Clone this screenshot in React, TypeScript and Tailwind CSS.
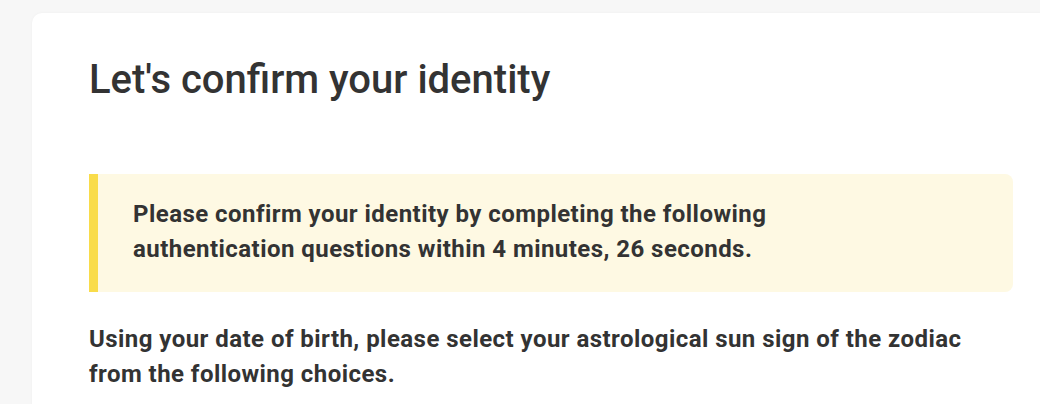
export default function App() {
	return (
		<div
			className="h-[404px] w-full overflow-hidden bg-[#f7f7f7] pl-8 pt-[13px] text-[#333333]"
			style={{ fontFamily: 'Roboto, "Noto Sans", sans-serif' }}
		>
			<div className="min-h-[420px] w-[1038px] rounded-[10px] bg-white pl-[57px] pr-[57px] pt-[43px] shadow-[0_0_3px_rgba(0,0,0,0.04)]">
				<h1 className="text-[40px] font-medium leading-[48px]">Let's confirm your identity</h1>

				<div className="mt-[70px] flex rounded-r-lg bg-[#fef9e3]">
					<div className="w-[9px] shrink-0 bg-[#f9dc4a]" />
					<p className="max-w-[720px] pb-[25px] pl-[35px] pt-[23px] text-[24px] font-bold leading-[35px] tracking-[0.45px]">
						Please confirm your identity by completing the following authentication questions within 4 minutes, 26 seconds.
					</p>
				</div>

				<p className="mt-[30px] text-[24px] font-bold leading-[35px] tracking-[0.45px]">
					Using your date of birth, please select your astrological sun sign of the zodiac from the following choices.
				</p>
			</div>
		</div>
	)
}
